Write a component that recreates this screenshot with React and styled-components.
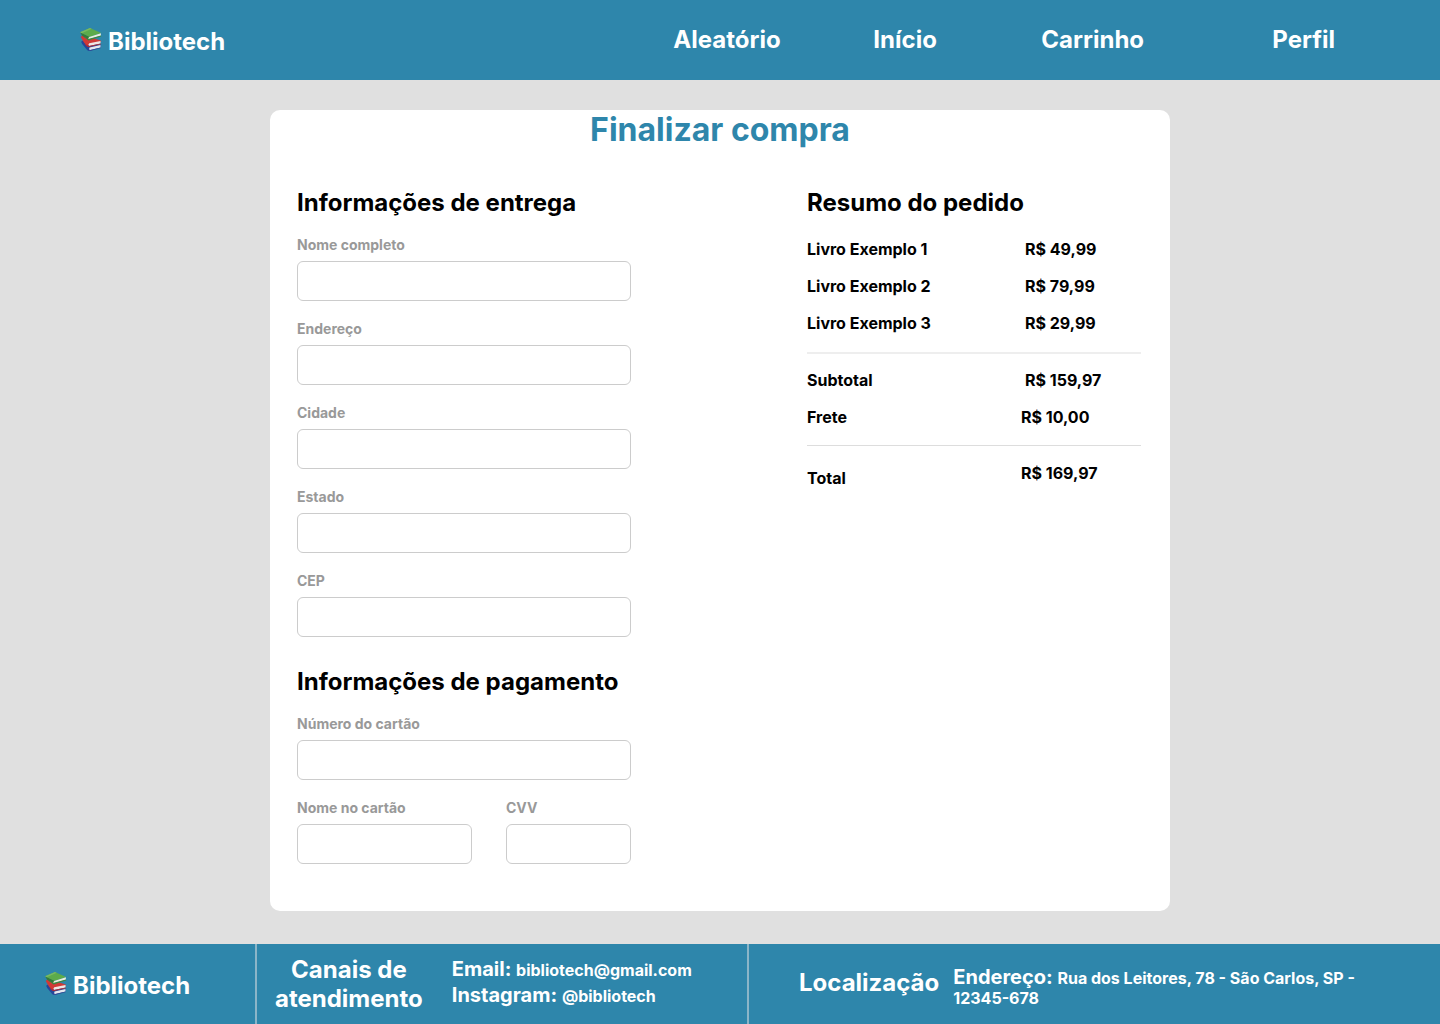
import React from "react";
import styled, { createGlobalStyle } from "styled-components";

const BLUE = "#2e86ab";

const GlobalStyle = createGlobalStyle`
  *, *::before, *::after { box-sizing: border-box; }
  body {
    margin: 0;
    background: #e0e0e0;
    color: #000;
    font-family: Inter, "Liberation Sans", sans-serif;
    font-weight: 700;
    font-size: 16px;
    line-height: 19px;
  }
  h1, h2, h3, p, dl, dt, dd { margin: 0; font-weight: 700; }
  a { color: inherit; text-decoration: none; }
`;

const Page = styled.div`
  min-height: 100vh;
  display: flex;
  flex-direction: column;
`;

const Header = styled.header`
  display: flex;
  align-items: center;
  justify-content: space-between;
  min-height: 80px;
  padding: 0 105px 0 80px;
  background: ${BLUE};
  color: #fff;
`;

const Nav = styled.nav`
  display: grid;
  grid-template-columns: 200px 168px 231px auto;
  padding-bottom: 2px;
  font-size: 24px;
  line-height: 29px;
`;

const BrandLink = styled.a`
  display: flex;
  align-items: center;
  gap: 6px;
  padding-top: 2px;
  font-size: 24px;
  line-height: 29px;
`;

const BookIcon = styled.svg`
  width: 22px;
  height: 24px;
  margin-bottom: 4px;
`;

const Main = styled.main`
  flex: 1;
  padding: 30px 20px 33px;
`;

const Card = styled.section`
  max-width: 900px;
  margin: 0 auto;
  padding: 0 27px 47px;
  border-radius: 10px;
  background: #fff;
`;

const Title = styled.h1`
  margin-bottom: 39px;
  color: ${BLUE};
  font-size: 32px;
  line-height: 39px;
  text-align: center;
`;

const Columns = styled.div`
  display: flex;
  justify-content: space-between;
  align-items: flex-start;
  gap: 40px;
`;

const Form = styled.form`
  display: grid;
  gap: 30px;
  flex: 0 1 334px;
`;

const FormGroup = styled.section`
  display: grid;
  gap: 20px;
`;

const Heading = styled.h2`
  font-size: 24px;
  line-height: 29px;
`;

const FieldBox = styled.div`
  display: grid;
  gap: 8px;
`;

const Label = styled.label`
  color: #999;
  font-size: 14px;
  line-height: 16px;
`;

const Input = styled.input`
  width: 100%;
  height: 40px;
  padding: 0 12px;
  border: 1px solid #ccc;
  border-radius: 6px;
  background: #fff;
  font: inherit;
`;

const CardRow = styled.div`
  display: grid;
  grid-template-columns: 175fr 125fr;
  gap: 34px;
`;

const Summary = styled.section`
  flex: 0 1 336px;
`;

const Prices = styled.dl`
  display: grid;
  gap: 18px;
  padding: ${(p) => p.$pad};
  margin-right: 2px;
  border-bottom: ${(p) => p.$rule || "none"};
`;

const PriceRow = styled.div`
  display: grid;
  grid-template-columns: ${(p) => (p.$charge ? 214 : 218)}px 1fr;
`;

const PriceLabel = styled.dt`
  padding-top: ${(p) => (p.$total ? 5 : 0)}px;
`;

const Footer = styled.footer`
  display: grid;
  grid-template-columns: 257fr 492fr 691fr;
  min-height: 80px;
  background: ${BLUE};
  color: #fff;
`;

const FooterCell = styled.section`
  display: flex;
  align-items: center;
  gap: ${(p) => p.$gap || 0}px;
  padding: ${(p) => p.$pad};
  border-right: ${(p) => (p.$last ? "none" : "2px solid #8bb5c8")};
`;

const FooterTitle = styled.h2`
  font-size: 24px;
  line-height: 29px;
  text-align: center;
`;

const Contacts = styled.div`
  display: grid;
  gap: 2px;
  padding-bottom: 4px;
`;

const Detail = styled.p`
  padding-top: ${(p) => (p.$address ? 8 : 0)}px;
`;

const Term = styled.span`
  font-size: 20px;
  line-height: 24px;
`;

function Brand() {
  return (
    <BrandLink href="#">
      <BookIcon viewBox="2 0 62 68" aria-hidden="true">
        <path d="M5 42 L10 38 L36 48 L62 50 L60 58 L29 68 Q24 68 22 65 L8 48 Z" fill="#25469a" />
        <path d="M29 58 L60 51 L60 58 L30 66 Q26 62 29 58Z" fill="#e5e8ee" />
        <path d="M30 65 L61 58 L60 60 L30 68Z" fill="#2d4a94" />
        <path d="M4 28 L10 22 L60 38 L62 42 L28 52 Q18 53 13 44Z" fill="#d03a36" />
        <path d="M28 46 L60 40 L60 47 L28 54 Q23 50 28 46Z" fill="#eee7e6" />
        <path d="M15 46 L27 54 L61 47 L61 49 L27 57 Q19 56 15 46Z" fill="#bd2a2c" />
        <path d="M2 15 L8 25 L25 36 L29 27Z" fill="#347a3a" />
        <path d="M2 15 L30 3 L62 17 L29 28Z" fill="#5cab4b" />
        <path d="M2 15 L30 3 L35 5 L7 18Z" fill="#78b962" />
        <path d="M28 28 L61 18 L61 25 L27 35 Q23 31 28 28Z" fill="#e8eee2" />
        <path d="M25 34 L61 24 L62 27 L26 38 L8 25Z" fill="#3a8842" />
      </BookIcon>
      <span>Bibliotech</span>
    </BrandLink>
  );
}

function Field({ id, label }) {
  return (
    <FieldBox>
      <Label htmlFor={id}>{label}</Label>
      <Input id={id} name={id} type="text" />
    </FieldBox>
  );
}

function Price({ label, value, charge, total }) {
  return (
    <PriceRow $charge={charge}>
      <PriceLabel $total={total}>{label}</PriceLabel>
      <dd>{value}</dd>
    </PriceRow>
  );
}

export default function App() {
  return (
    <Page>
      <GlobalStyle />
      <Header>
        <Brand />
        <Nav>
          <a href="#aleatorio">Aleatório</a>
          <a href="#inicio">Início</a>
          <a href="#carrinho">Carrinho</a>
          <a href="#perfil">Perfil</a>
        </Nav>
      </Header>

      <Main>
        <Card>
          <Title>Finalizar compra</Title>
          <Columns>
            <Form>
              <FormGroup>
                <Heading>Informações de entrega</Heading>
                <Field id="nome" label="Nome completo" />
                <Field id="endereco" label="Endereço" />
                <Field id="cidade" label="Cidade" />
                <Field id="estado" label="Estado" />
                <Field id="cep" label="CEP" />
              </FormGroup>
              <FormGroup>
                <Heading>Informações de pagamento</Heading>
                <Field id="numero-cartao" label="Número do cartão" />
                <CardRow>
                  <Field id="nome-cartao" label="Nome no cartão" />
                  <Field id="cvv" label="CVV" />
                </CardRow>
              </FormGroup>
            </Form>

            <Summary>
              <Heading>Resumo do pedido</Heading>
              <Prices $pad="23px 0 19px" $rule="2px solid #eee">
                <Price label="Livro Exemplo 1" value="R$ 49,99" />
                <Price label="Livro Exemplo 2" value="R$ 79,99" />
                <Price label="Livro Exemplo 3" value="R$ 29,99" />
              </Prices>
              <Prices $pad="17px 0 18px" $rule="1px solid #ddd">
                <Price label="Subtotal" value="R$ 159,97" />
                <Price label="Frete" value="R$ 10,00" charge />
              </Prices>
              <Prices $pad="18px 0 0">
                <Price label="Total" value="R$ 169,97" charge total />
              </Prices>
            </Summary>
          </Columns>
        </Card>
      </Main>

      <Footer>
        <FooterCell $pad="0 0 0 45px">
          <Brand />
        </FooterCell>
        <FooterCell $pad="0 18px" $gap={29}>
          <FooterTitle>
            Canais de
            <br />
            atendimento
          </FooterTitle>
          <Contacts>
            <Detail>
              <Term>Email: </Term>
              <a href="mailto:bibliotech@gmail.com">bibliotech@gmail.com</a>
            </Detail>
            <Detail>
              <Term>Instagram: </Term>
              <a href="#instagram">@bibliotech</a>
            </Detail>
          </Contacts>
        </FooterCell>
        <FooterCell $pad="0 68px 4px 50px" $gap={14} $last>
          <FooterTitle>Localização</FooterTitle>
          <Detail $address>
            <Term>Endereço: </Term>
            Rua dos Leitores, 78 - São Carlos, SP - 12345-678
          </Detail>
        </FooterCell>
      </Footer>
    </Page>
  );
}
